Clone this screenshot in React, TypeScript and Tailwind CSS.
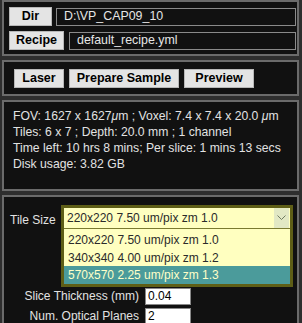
import React from "react";

const font = { fontFamily: '"Liberation Sans", Arial, sans-serif' };

function Btn({ children, w }: { children: React.ReactNode; w: string }) {
  return (
    <div
      className={`${w} h-[19px] flex items-center justify-center bg-[#e4e4e4] border border-[#b8b8b8] text-[12.5px] font-bold text-black leading-none`}
    >
      {children}
    </div>
  );
}

export default function App() {
  return (
    <div
      className="w-[302px] h-[323px] overflow-hidden bg-[#2e2e2e] pl-[2px] pr-[3px] flex flex-col gap-[4px]"
      style={font}
    >
      {/* Panel 1 */}
      <div className="h-[56px] shrink-0 border-2 border-[#6b6b6b] bg-[#111111] pl-[5px] pr-[1px] pt-[5px] flex flex-col gap-[5px]">
        <div className="flex items-center gap-[4px]">
          <Btn w="w-[43px]">Dir</Btn>
          <div className="flex-1 h-[18px] border border-[#8a8a8a] bg-[#111] text-[12.4px] text-[#e6e6e6] pl-[7px] flex items-center">
            D:\VP_CAP09_10
          </div>
        </div>
        <div className="flex items-center gap-[5px]">
          <Btn w="w-[55px]">Recipe</Btn>
          <div className="flex-1 h-[18px] border border-[#8a8a8a] bg-[#111] text-[12.4px] text-[#e6e6e6] pl-[7px] flex items-center">
            default_recipe.yml
          </div>
        </div>
      </div>

      {/* Panel 2 */}
      <div className="h-[36px] shrink-0 border-2 border-[#6b6b6b] bg-[#111111] pl-[10px] flex items-center gap-[5px]">
        <Btn w="w-[50px]">Laser</Btn>
        <Btn w="w-[110px]">Prepare Sample</Btn>
        <Btn w="w-[70px]">Preview</Btn>
      </div>

      {/* Panel 3 */}
      <div className="h-[91px] shrink-0 border-2 border-[#6b6b6b] bg-[#111111] pl-[9px] pt-[6px] text-[12.2px] leading-[16px] text-[#e2e2e2] whitespace-nowrap">
        <div>FOV: 1627 x 1627<span className="italic">μ</span>m ; Voxel: 7.4 x 7.4 x 20.0 <span className="italic">μ</span>m</div>
        <div>Tiles: 6 x 7 ; Depth: 20.0 mm ; 1 channel</div>
        <div>Time left: 10 hrs 8 mins; Per slice: 1 mins 13 secs</div>
        <div>Disk usage: 3.82 GB</div>
      </div>

      {/* Panel 4 */}
      <div className="flex-1 border-2 border-[#6b6b6b] border-b-0 bg-[#111111] pt-[8px]">
        <div className="flex items-start">
          <div className="w-[57px] pl-[6px] pt-[7px] text-[12px] text-[#e2e2e2] leading-[16px]">Tile Size</div>
          <div className="w-[232px] border-[3px] border-[#5e5e16] bg-[#ffffc0] text-[12px] text-[#2a2a2a]">
            <div className="h-[21px] flex items-center border-b-[1px] border-[#7a7a30]">
              <span className="flex-1 pl-[3px]">220x220 7.50 um/pix zm 1.0</span>
              <span className="w-[15px] h-full bg-[#e2e8c4] flex items-center justify-center mr-[1px]">
                <svg width="9" height="6" viewBox="0 0 9 6">
                  <path d="M0.5 0.5 L4.5 4.5 L8.5 0.5" stroke="#6f7a60" strokeWidth="1" fill="none" />
                </svg>
              </span>
            </div>
            <div className="h-[18px] flex items-center pl-[4px] mt-[2px]">220x220 7.50 um/pix zm 1.0</div>
            <div className="h-[17px] flex items-center pl-[4px]">340x340 4.00 um/pix zm 1.2</div>
            <div className="h-[18px] flex items-center pl-[4px] bg-[#4b9b9b] text-[#ffffc8]">570x570 2.25 um/pix zm 1.3</div>
          </div>
        </div>
        <div className="flex items-center mt-[0px]">
          <div className="w-[135px] text-right text-[12px] text-[#e2e2e2]">Slice Thickness (mm)</div>
          <div className="ml-[6px] w-[46px] h-[17px] bg-white border border-[#888] text-[12px] text-black pl-[2px] flex items-center">0.04</div>
        </div>
        <div className="flex items-center mt-[2px]">
          <div className="w-[135px] text-right text-[12px] text-[#e2e2e2]">Num. Optical Planes</div>
          <div className="ml-[6px] w-[46px] h-[17px] bg-white border border-[#888] text-[12px] text-black pl-[2px] flex items-center">2</div>
        </div>
      </div>
    </div>
  );
}
